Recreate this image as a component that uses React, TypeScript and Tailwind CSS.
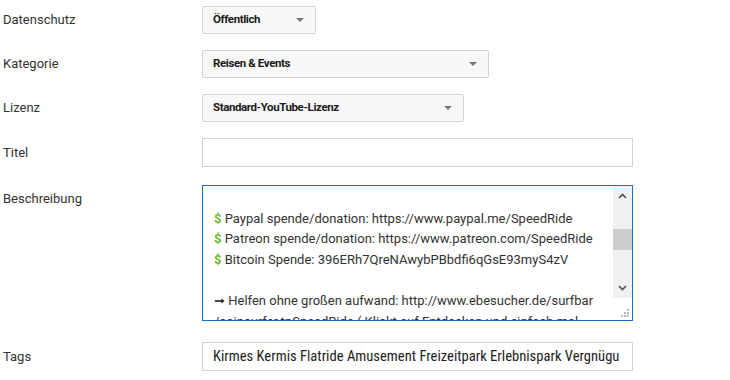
import React from "react";

function Caret() {
  return (
    <svg width="8" height="4" viewBox="0 0 8 4" className="shrink-0">
      <path d="M0 0 L8 0 L4 4 Z" fill="#777" />
    </svg>
  );
}

function Select({ label, width }: { label: string; width: string }) {
  return (
    <div
      className={`${width} h-[28px] flex items-center justify-between pl-[10px] pr-[11px] bg-[#f8f8f8] border border-[#d3d3d3] rounded-[2px]`}
    >
      <span className="text-[11.5px] font-bold tracking-[-0.4px] text-[#1a1a1a]">{label}</span>
      <Caret />
    </div>
  );
}

function Row({ label, children, top }: { label: string; children: React.ReactNode; top?: boolean }) {
  return (
    <div className={`flex ${top ? "items-start" : "items-center"}`}>
      <div className={`w-[202px] shrink-0 pl-[3px] text-[13px] text-[#333] ${top ? "h-[28px] flex items-center" : ""}`}>
        {label}
      </div>
      {children}
    </div>
  );
}

const Dollar = () => <span className="text-[#6dbb2f] font-bold">$</span>;

export default function App() {
  return (
    <div
      className="w-[730px] h-[380px] bg-white overflow-hidden pt-[6px]"
      style={{ fontFamily: "Roboto, 'Liberation Sans', sans-serif" }}
    >
      <div className="flex flex-col">
        <Row label="Datenschutz">
          <Select label="Öffentlich" width="w-[114px]" />
        </Row>
        <div className="h-[16px]" />
        <Row label="Kategorie">
          <Select label="Reisen & Events" width="w-[287px]" />
        </Row>
        <div className="h-[16px]" />
        <Row label="Lizenz">
          <Select label="Standard-YouTube-Lizenz" width="w-[262px]" />
        </Row>
        <div className="h-[16px]" />
        <Row label="Titel">
          <div className="w-[431px] h-[29px] border border-[#d3d3d3] bg-white" />
        </Row>
        <div className="h-[18px]" />
        <Row label="Beschreibung" top>
          <div className="w-[431px] h-[136px] border border-[#1a73c8] bg-white flex overflow-hidden">
            <div className="flex-1 overflow-hidden pl-[11px] pt-[2px] text-[13px] leading-[20.6px] text-[#333] whitespace-nowrap">
              <div>&nbsp;</div>
              <div>
                <Dollar /> Paypal spende/donation: https://www.paypal.me/SpeedRide
              </div>
              <div>
                <Dollar /> Patreon spende/donation: https://www.patreon.com/SpeedRide
              </div>
              <div>
                <Dollar /> Bitcoin Spende: 396ERh7QreNAwybPBbdfi6qGsE93myS4zV
              </div>
              <div>&nbsp;</div>
              <div>
                <span className="text-[#222]">➞</span> Helfen ohne großen aufwand: http://www.ebesucher.de/surfbar
              </div>
              <div>/coinsurfer.tpSpeedRide ( Klickt auf Entdecken und einfach mal</div>
            </div>
            <div className="w-[19px] shrink-0 flex flex-col">
              <div className="h-[112px] bg-[#f0f0f0] flex flex-col items-center">
                <div className="h-[20px] flex items-center justify-center">
                  <svg width="9" height="6" viewBox="0 0 9 6">
                    <path d="M1 5 L4.5 1.5 L8 5" stroke="#505050" strokeWidth="1.6" fill="none" />
                  </svg>
                </div>
                <div className="mt-[23px] w-full h-[21px] bg-[#cdcdcd]" />
                <div className="flex-1" />
                <div className="h-[20px] flex items-center justify-center">
                  <svg width="9" height="6" viewBox="0 0 9 6">
                    <path d="M1 1 L4.5 4.5 L8 1" stroke="#505050" strokeWidth="1.6" fill="none" />
                  </svg>
                </div>
              </div>
              <div className="flex-1 flex items-end justify-end pr-[2px] pb-[2px]">
                <svg width="9" height="9" viewBox="0 0 9 9">
                  <rect x="6" y="0" width="2" height="2" fill="#b8b8b8" />
                  <rect x="3" y="3" width="2" height="2" fill="#b8b8b8" />
                  <rect x="6" y="3" width="2" height="2" fill="#b8b8b8" />
                  <rect x="0" y="6" width="2" height="2" fill="#b8b8b8" />
                  <rect x="3" y="6" width="2" height="2" fill="#b8b8b8" />
                  <rect x="6" y="6" width="2" height="2" fill="#b8b8b8" />
                </svg>
              </div>
            </div>
          </div>
        </Row>
        <div className="h-[21px]" />
        <Row label="Tags">
          <div className="w-[431px] h-[29px] border border-[#d3d3d3] bg-white flex items-center pl-[10px] pr-[9px]">
            <div
              className="flex-1 overflow-hidden whitespace-nowrap text-[14.6px] text-[#222]"
              style={{ fontFamily: "'Roboto Condensed', 'Liberation Sans Narrow', Roboto, sans-serif" }}
            >
              Kirmes Kermis Flatride Amusement Freizeitpark Erlebnispark Vergnügu
            </div>
          </div>
        </Row>
      </div>
    </div>
  );
}
